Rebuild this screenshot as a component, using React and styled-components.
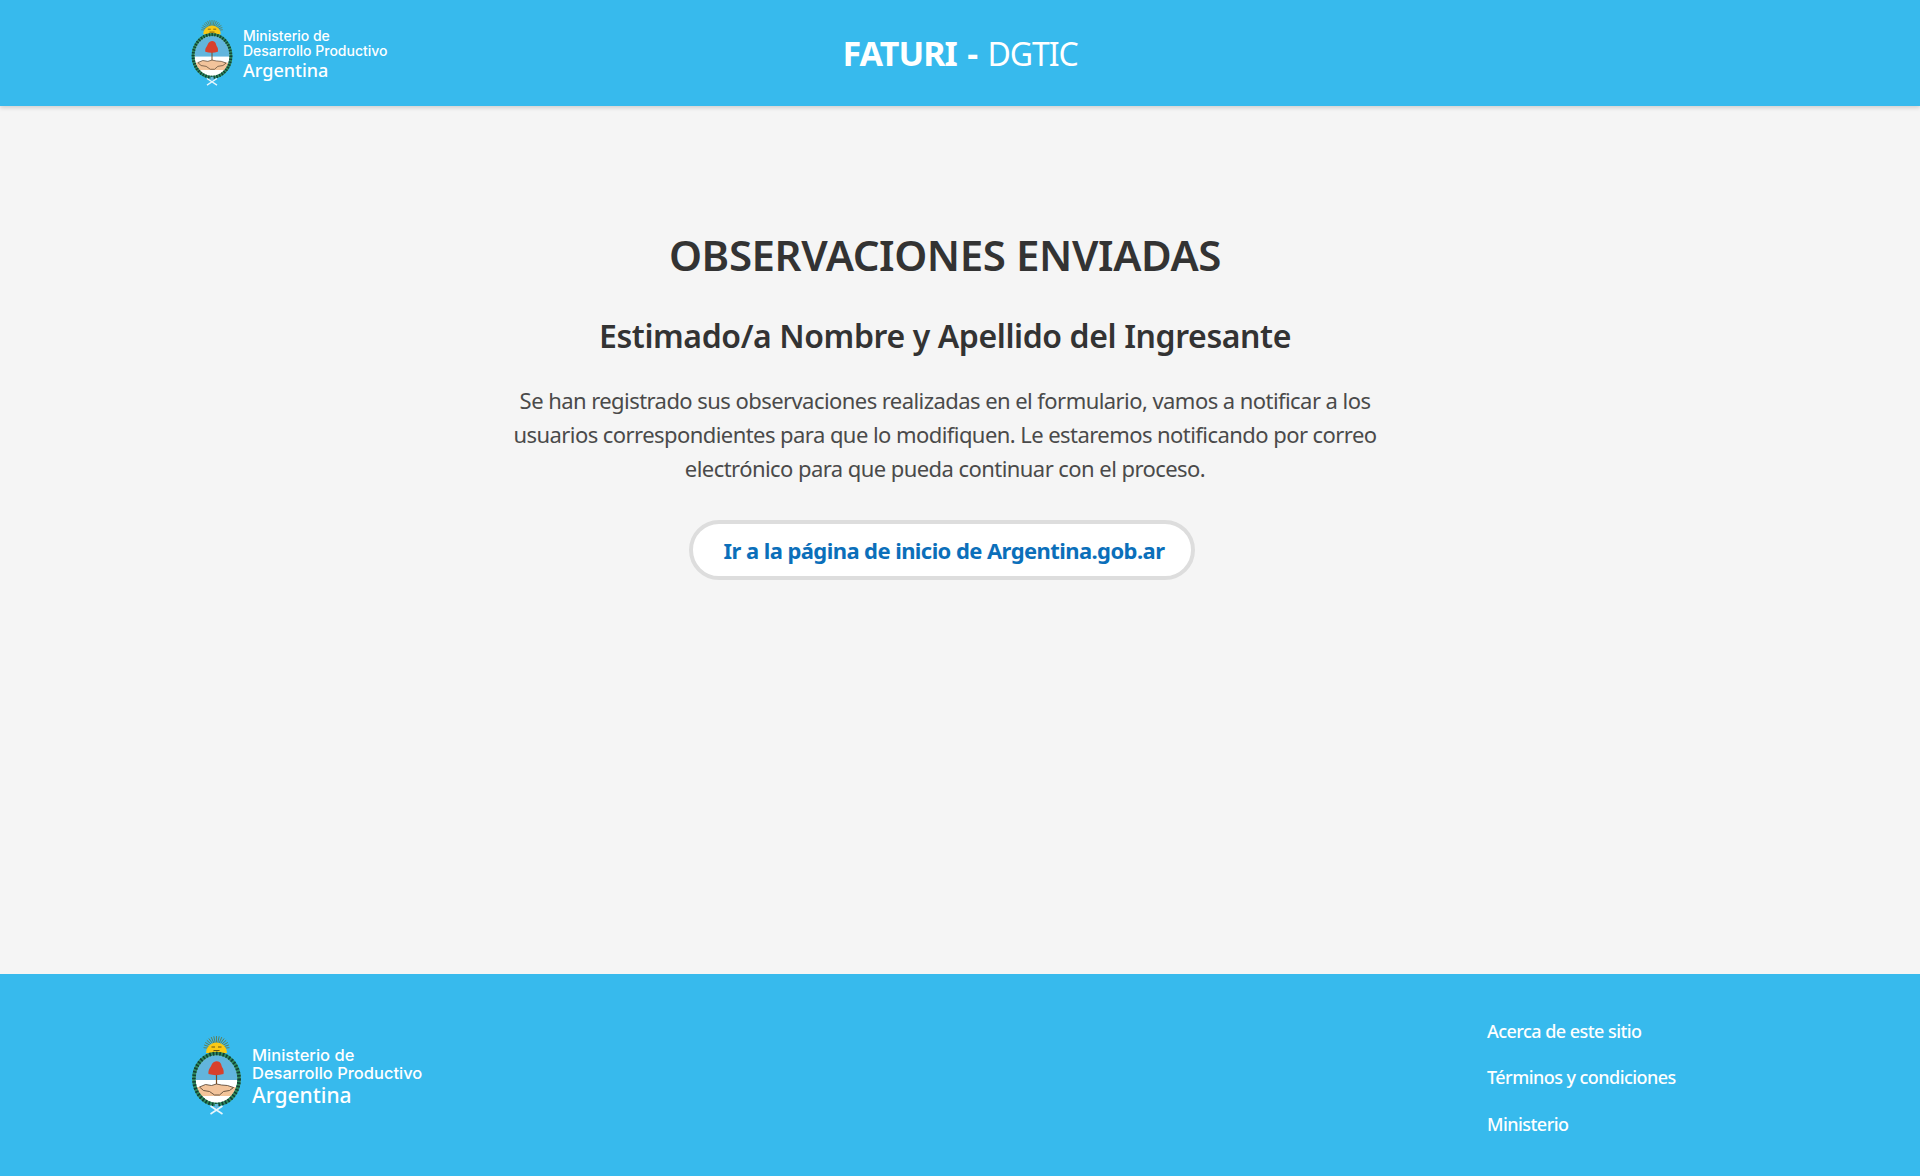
import React from "react";
import styled, { createGlobalStyle } from "styled-components";

const GlobalStyle = createGlobalStyle`
  html, body {
    margin: 0;
    padding: 0;
    background: #f5f5f5;
  }
  body {
    font-family: "Noto Sans", "Open Sans", sans-serif;
  }
`;

const Page = styled.div`
  min-height: 100vh;
  display: flex;
  flex-direction: column;
`;

const Header = styled.header`
  height: 106px;
  background: #37baed;
  box-shadow: 0 2px 4px rgba(0, 0, 0, 0.15);
  display: grid;
  grid-template-columns: 1fr auto 1fr;
  align-items: center;
  padding: 0 191px;
  position: relative;
`;

const Title = styled.div`
  font-size: 34px;
  color: #fff;
  letter-spacing: -0.95px;
  word-spacing: 2.5px;
  white-space: nowrap;
  b {
    font-weight: 700;
  }
  span {
    font-size: 32px;
    letter-spacing: -1.1px;
  }
`;

const Brand = styled.div`
  display: flex;
  align-items: center;
  gap: 10px;
`;

const BrandText = styled.div`
  font-family: Inter, "Noto Sans", sans-serif;
  font-weight: 500;
  color: #fff;
  font-size: ${({ $big }) => ($big ? "16.5px" : "14px")};
  line-height: ${({ $big }) => ($big ? "18px" : "15.5px")};
  margin-top: ${({ $big }) => ($big ? "5px" : "3px")};
  white-space: nowrap;
  span {
    display: block;
    font-size: ${({ $big }) => ($big ? "21px" : "18px")};
    line-height: ${({ $big }) => ($big ? "27px" : "23px")};
    font-family: "Noto Sans", sans-serif;
    font-weight: 500;
  }
`;

const Main = styled.main`
  flex: 1;
  display: flex;
  flex-direction: column;
  align-items: center;
  padding: 125px 30px 0 0;
  color: #333;
`;

const Heading = styled.h1`
  margin: 0;
  font-size: 42px;
  line-height: 48px;
  font-weight: 600;
  letter-spacing: -0.4px;
`;

const SubHeading = styled.h2`
  margin: 37px 0 0;
  font-size: 32px;
  line-height: 40px;
  font-weight: 600;
  letter-spacing: -0.4px;
`;

const Message = styled.p`
  margin: 27px 0 0;
  width: 880px;
  text-align: center;
  font-size: 22px;
  line-height: 34px;
  color: #4a4a4a;
  letter-spacing: -0.56px;
`;

const HomeButton = styled.a`
  margin: 35px 6px 0 0;
  height: 60px;
  box-sizing: border-box;
  display: flex;
  align-items: center;
  padding: 0 27px 0 31px;
  background: #fff;
  border: 4px solid #ddd;
  border-radius: 30px;
  color: #0b6fba;
  font-size: 22px;
  font-weight: 700;
  letter-spacing: -0.58px;
  white-space: nowrap;
`;

const Footer = styled.footer`
  height: 202px;
  box-sizing: border-box;
  background: #37baed;
  padding: 0 191px;
  display: flex;
  justify-content: space-between;
  align-items: center;
`;

const FooterNav = styled.nav`
  width: 242px;
  display: flex;
  flex-direction: column;
  gap: 20px;
  margin-top: 5px;
`;

const FooterLink = styled.a`
  color: #fff;
  font-size: 18px;
  line-height: 26.5px;
  font-weight: 500;
  letter-spacing: -0.55px;
  white-space: nowrap;
`;

const rays = Array.from({ length: 15 }, (_, i) => -84 + i * 12);

const Emblem = ({ id, width, height }) => (
  <svg width={width} height={height} viewBox="0 0 50 79">
    <g stroke="#6f6a24" strokeWidth="0.7">
      {rays.map((a, i) => (
        <line key={i} x1="25" y1="13" x2="25" y2="0" transform={`rotate(${a} 25 13)`} />
      ))}
    </g>
    <path d="M14.500 17a10.500 10.500 0 0 1 21 0z" fill="#f9c916" />
    <path d="M20 11h3.500M26.500 11h3.500M22 14.500h6" stroke="#6b5312" strokeWidth="1" />
    <ellipse cx="25" cy="43" rx="24" ry="26.500" fill="#fff" />
    <clipPath id={id}>
      <ellipse cx="25" cy="43" rx="21" ry="24" />
    </clipPath>
    <g clipPath={`url(#${id})`}>
      <rect x="0" y="16" width="50" height="28" fill="#62b5dd" />
      <rect x="0" y="44" width="50" height="7" fill="#fff" />
      <rect x="0" y="51" width="50" height="9" fill="#f3c49a" />
      <rect x="0" y="60" width="50" height="10" fill="#fff" />
    </g>
    <path d="M25 36v12" stroke="#7a4a20" strokeWidth="1.200" />
    <path
      d="M17 38c-.5-5 2-6 3-9 1-3 5-5 8-3 2 1.500 1.500 3 2.500 5 1.500 2 2 4 1.500 7-5 1.500-10 1.500-15 0z"
      fill="#d8402b"
    />
    <path
      d="M8 51l6-2.500 6 1 5-1.500 5 1 6 .5 6 2-4 3-6 1-4 3.500-5 0-5-3.500-6-1z"
      fill="#f2c39b"
      stroke="#4b3a2a"
      strokeWidth="0.800"
    />
    <ellipse cx="25" cy="43" rx="22.600" ry="25.500" fill="none" stroke="#2d8a5c" strokeWidth="3.600" />
    <ellipse
      cx="25"
      cy="43"
      rx="22.600"
      ry="25.500"
      fill="none"
      stroke="#123f35"
      strokeWidth="3.600"
      strokeDasharray="1.600 1.800"
    />
    <path d="M25 68v4" stroke="#62b5dd" strokeWidth="3.500" />
    <path d="M19 78l12-8M31 78l-12-8" stroke="#e8f6fc" strokeWidth="1.600" />
  </svg>
);

const Logo = ({ big }) => (
  <Brand>
    {big ? <Emblem id="shield-footer" width={51} height={79} /> : <Emblem id="shield-header" width={42} height={66} />}
    <BrandText $big={big}>
      Ministerio de
      <br />
      Desarrollo Productivo
      <span>Argentina</span>
    </BrandText>
  </Brand>
);

const App = () => (
  <>
    <GlobalStyle />
    <Page>
      <Header>
        <Logo />
        <Title>
          <b>FATURI -</b> <span>DGTIC</span>
        </Title>
      </Header>
      <Main>
        <Heading>OBSERVACIONES ENVIADAS</Heading>
        <SubHeading>Estimado/a Nombre y Apellido del Ingresante</SubHeading>
        <Message>
          Se han registrado sus observaciones realizadas en el formulario, vamos a notificar a los
          usuarios correspondientes para que lo modifiquen. Le estaremos notificando por correo
          electrónico para que pueda continuar con el proceso.
        </Message>
        <HomeButton>Ir a la página de inicio de Argentina.gob.ar</HomeButton>
      </Main>
      <Footer>
        <Logo big />
        <FooterNav>
          <FooterLink>Acerca de este sitio</FooterLink>
          <FooterLink>Términos y condiciones</FooterLink>
          <FooterLink>Ministerio</FooterLink>
        </FooterNav>
      </Footer>
    </Page>
  </>
);

export default App;
